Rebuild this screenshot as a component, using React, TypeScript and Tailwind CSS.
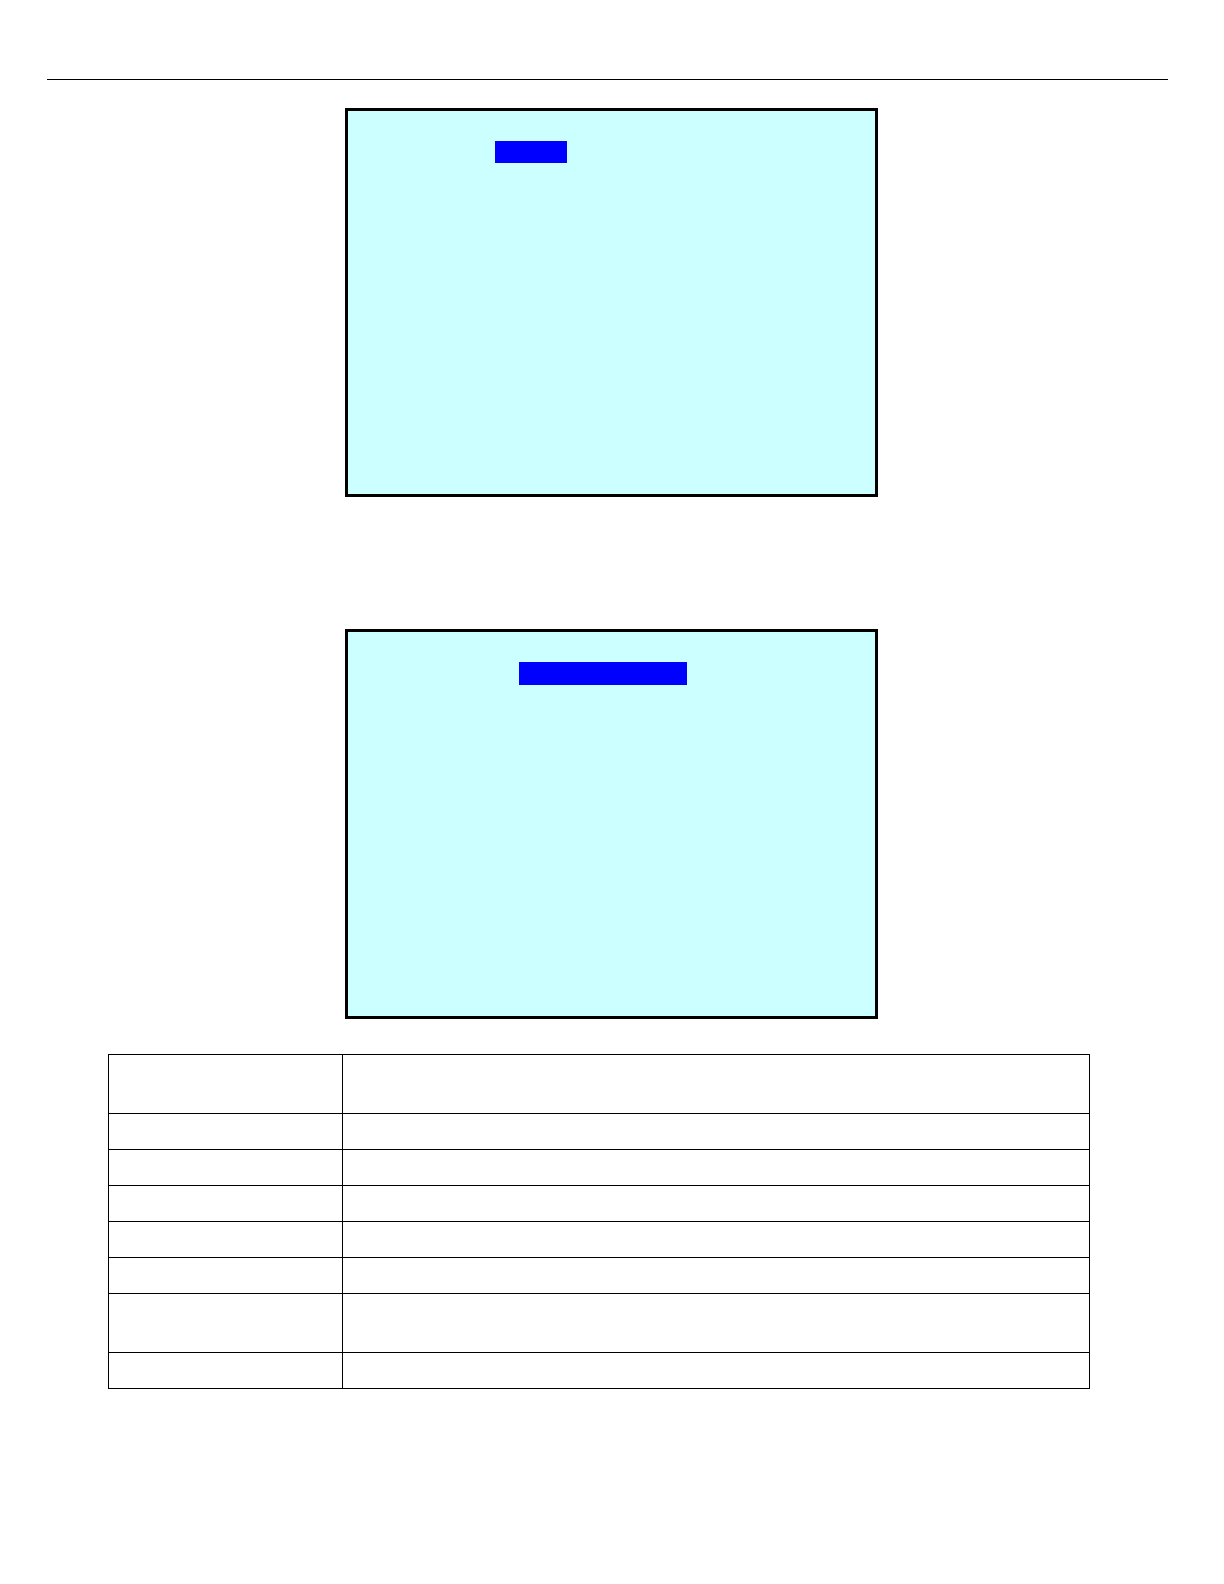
const rows = [
  { id: 1, height: "h-[59px]" },
  { id: 2, height: "h-9" },
  { id: 3, height: "h-9" },
  { id: 4, height: "h-9" },
  { id: 5, height: "h-9" },
  { id: 6, height: "h-9" },
  { id: 7, height: "h-[59px]" },
  { id: 8, height: "h-9" },
];

function Screen({ className, highlight }: { className: string; highlight: string }) {
  return (
    <div
      className={`w-full max-w-[533px] mx-auto border-3 border-black bg-[#ccffff] pt-[30px] ${className}`}
    >
      {/* Selected menu entry */}
      <div className={`bg-[#0000ff] ${highlight}`} />
    </div>
  );
}

export default function App() {
  return (
    <div className="min-h-screen bg-white font-['Liberation_Sans',sans-serif] text-black">
      {/* Header rule */}
      <header className="pl-[47px] pr-14 pt-[79px]">
        <hr className="border-t border-black" />
      </header>

      <main>
        <section className="flex flex-col gap-[132px] pt-7 pr-px">
          <Screen className="h-[389px]" highlight="ml-[147px] w-[72px] h-[22px]" />
          <Screen className="h-[390px]" highlight="ml-[171px] w-[168px] h-[23px]" />
        </section>

        {/* Description table */}
        <section className="pt-[35px] pb-12 pl-[108px] pr-[134px]">
          <table className="w-full table-fixed border-collapse">
            <colgroup>
              <col className="w-[234px]" />
              <col />
            </colgroup>
            <tbody>
              {rows.map((row) => (
                <tr key={row.id} className={row.height}>
                  <td className="border border-black" />
                  <td className="border border-black" />
                </tr>
              ))}
            </tbody>
          </table>
        </section>
      </main>
    </div>
  );
}
